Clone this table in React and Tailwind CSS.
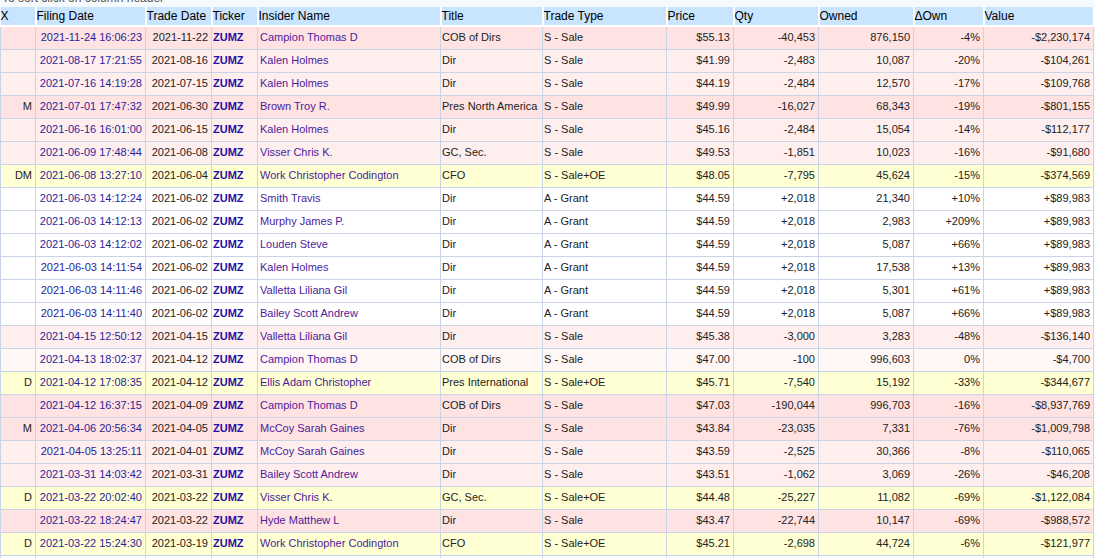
import React from 'react';

const cols = [
  { key: 'x', label: 'X', w: 35, align: 'text-right pr-[3px]' },
  { key: 'filed', label: 'Filing Date', w: 110, align: 'text-right pr-[3px]' },
  { key: 'trade', label: 'Trade Date', w: 66, align: 'text-right pr-[3px]' },
  { key: 'ticker', label: 'Ticker', w: 46, align: 'text-left pl-[1px]' },
  { key: 'name', label: 'Insider Name', w: 183, align: 'text-left pl-[2px]' },
  { key: 'title', label: 'Title', w: 102, align: 'text-left pl-[1px]' },
  { key: 'type', label: 'Trade Type', w: 124, align: 'text-left pl-[1px]' },
  { key: 'price', label: 'Price', w: 67, align: 'text-right pr-[3px]' },
  { key: 'qty', label: 'Qty', w: 85, align: 'text-right pr-[3px]' },
  { key: 'owned', label: 'Owned', w: 95, align: 'text-right pr-[3px]' },
  { key: 'own', label: '\u0394Own', w: 70, align: 'text-right pr-[3px]' },
  { key: 'value', label: 'Value', w: 110, align: 'text-right pr-[3px]' },
];

// tone: dark = big sale, light = sale, faint = tiny sale, oe = sale+OE, none = grant
const trades = [
  ['dark', '', '2021-11-24 16:06:23', '2021-11-22', 'Campion Thomas D', 'COB of Dirs', 'S - Sale', '$55.13', '-40,453', '876,150', '-4%', '-$2,230,174'],
  ['light', '', '2021-08-17 17:21:55', '2021-08-16', 'Kalen Holmes', 'Dir', 'S - Sale', '$41.99', '-2,483', '10,087', '-20%', '-$104,261'],
  ['light', '', '2021-07-16 14:19:28', '2021-07-15', 'Kalen Holmes', 'Dir', 'S - Sale', '$44.19', '-2,484', '12,570', '-17%', '-$109,768'],
  ['dark', 'M', '2021-07-01 17:47:32', '2021-06-30', 'Brown Troy R.', 'Pres North America', 'S - Sale', '$49.99', '-16,027', '68,343', '-19%', '-$801,155'],
  ['light', '', '2021-06-16 16:01:00', '2021-06-15', 'Kalen Holmes', 'Dir', 'S - Sale', '$45.16', '-2,484', '15,054', '-14%', '-$112,177'],
  ['light', '', '2021-06-09 17:48:44', '2021-06-08', 'Visser Chris K.', 'GC, Sec.', 'S - Sale', '$49.53', '-1,851', '10,023', '-16%', '-$91,680'],
  ['oe', 'DM', '2021-06-08 13:27:10', '2021-06-04', 'Work Christopher Codington', 'CFO', 'S - Sale+OE', '$48.05', '-7,795', '45,624', '-15%', '-$374,569'],
  ['none', '', '2021-06-03 14:12:24', '2021-06-02', 'Smith Travis', 'Dir', 'A - Grant', '$44.59', '+2,018', '21,340', '+10%', '+$89,983'],
  ['none', '', '2021-06-03 14:12:13', '2021-06-02', 'Murphy James P.', 'Dir', 'A - Grant', '$44.59', '+2,018', '2,983', '+209%', '+$89,983'],
  ['none', '', '2021-06-03 14:12:02', '2021-06-02', 'Louden Steve', 'Dir', 'A - Grant', '$44.59', '+2,018', '5,087', '+66%', '+$89,983'],
  ['none', '', '2021-06-03 14:11:54', '2021-06-02', 'Kalen Holmes', 'Dir', 'A - Grant', '$44.59', '+2,018', '17,538', '+13%', '+$89,983'],
  ['none', '', '2021-06-03 14:11:46', '2021-06-02', 'Valletta Liliana Gil', 'Dir', 'A - Grant', '$44.59', '+2,018', '5,301', '+61%', '+$89,983'],
  ['none', '', '2021-06-03 14:11:40', '2021-06-02', 'Bailey Scott Andrew', 'Dir', 'A - Grant', '$44.59', '+2,018', '5,087', '+66%', '+$89,983'],
  ['light', '', '2021-04-15 12:50:12', '2021-04-15', 'Valletta Liliana Gil', 'Dir', 'S - Sale', '$45.38', '-3,000', '3,283', '-48%', '-$136,140'],
  ['faint', '', '2021-04-13 18:02:37', '2021-04-12', 'Campion Thomas D', 'COB of Dirs', 'S - Sale', '$47.00', '-100', '996,603', '0%', '-$4,700'],
  ['oe', 'D', '2021-04-12 17:08:35', '2021-04-12', 'Ellis Adam Christopher', 'Pres International', 'S - Sale+OE', '$45.71', '-7,540', '15,192', '-33%', '-$344,677'],
  ['dark', '', '2021-04-12 16:37:15', '2021-04-09', 'Campion Thomas D', 'COB of Dirs', 'S - Sale', '$47.03', '-190,044', '996,703', '-16%', '-$8,937,769'],
  ['dark', 'M', '2021-04-06 20:56:34', '2021-04-05', 'McCoy Sarah Gaines', 'Dir', 'S - Sale', '$43.84', '-23,035', '7,331', '-76%', '-$1,009,798'],
  ['light', '', '2021-04-05 13:25:11', '2021-04-01', 'McCoy Sarah Gaines', 'Dir', 'S - Sale', '$43.59', '-2,525', '30,366', '-8%', '-$110,065'],
  ['light', '', '2021-03-31 14:03:42', '2021-03-31', 'Bailey Scott Andrew', 'Dir', 'S - Sale', '$43.51', '-1,062', '3,069', '-26%', '-$46,208'],
  ['oe', 'D', '2021-03-22 20:02:40', '2021-03-22', 'Visser Chris K.', 'GC, Sec.', 'S - Sale+OE', '$44.48', '-25,227', '11,082', '-69%', '-$1,122,084'],
  ['dark', '', '2021-03-22 18:24:47', '2021-03-22', 'Hyde Matthew L', 'Dir', 'S - Sale', '$43.47', '-22,744', '10,147', '-69%', '-$988,572'],
  ['oe', 'D', '2021-03-22 15:24:30', '2021-03-19', 'Work Christopher Codington', 'CFO', 'S - Sale+OE', '$45.21', '-2,698', '44,724', '-6%', '-$121,977'],
  ['none', '', '2021-03-19 16:10:05', '2021-03-18', 'Smith Travis', 'Dir', 'S - Sale', '$44.10', '-1,000', '19,322', '-5%', '-$44,100'],
];

const tones = {
  dark: 'bg-[#ffe2e2]',
  light: 'bg-[#ffeeee]',
  faint: 'bg-[#fff6f6]',
  oe: 'bg-[#ffffd4]',
  none: 'bg-white',
};

function Cell({ col, value }) {
  let extra = 'text-[#222]';
  if (col.key === 'filed') extra = 'text-[#2a1e9c]';
  if (col.key === 'ticker') extra = 'text-[#1f10a6] font-bold';
  if (col.key === 'name') extra = 'text-[#4b1c9c]';
  return (
    <td className={`h-[23px] border border-[#c9d5e6] py-0 whitespace-nowrap overflow-hidden ${col.align} ${extra}`}>
      {value}
    </td>
  );
}

export default function App() {
  return (
    <div className="min-h-screen bg-[#f7fafd] overflow-hidden" style={{ fontFamily: '"Liberation Sans", Arial, sans-serif' }}>
      <div className="h-[7px] overflow-hidden text-[12px] leading-[12px] text-[#555] pl-[2px]">
        <div className="-mt-[8px]">To sort click on column header</div>
      </div>
      <table className="table-fixed border-collapse w-[1093px] text-[11px] leading-[13px]">
        <colgroup>
          {cols.map((c) => (
            <col key={c.key} style={{ width: c.w }} />
          ))}
        </colgroup>
        <thead>
          <tr>
            {cols.map((c) => (
              <th
                key={c.key}
                className="h-[19px] bg-[#c8e4fe] border-x-2 border-b-2 border-t-0 border-white first:border-l-0 text-left font-normal text-[12px] text-black pl-0 pr-0 py-0 whitespace-nowrap"
              >
                {c.label}
              </th>
            ))}
          </tr>
        </thead>
        <tbody>
          {trades.map((t, i) => {
            const [tone, ...vals] = t;
            const cells = [vals[0], vals[1], vals[2], 'ZUMZ', vals[3], vals[4], vals[5], vals[6], vals[7], vals[8], vals[9], vals[10]];
            return (
              <tr key={i} className={tones[tone]}>
                {cols.map((c, j) => (
                  <Cell key={c.key} col={c} value={cells[j]} />
                ))}
              </tr>
            );
          })}
        </tbody>
      </table>
    </div>
  );
}
